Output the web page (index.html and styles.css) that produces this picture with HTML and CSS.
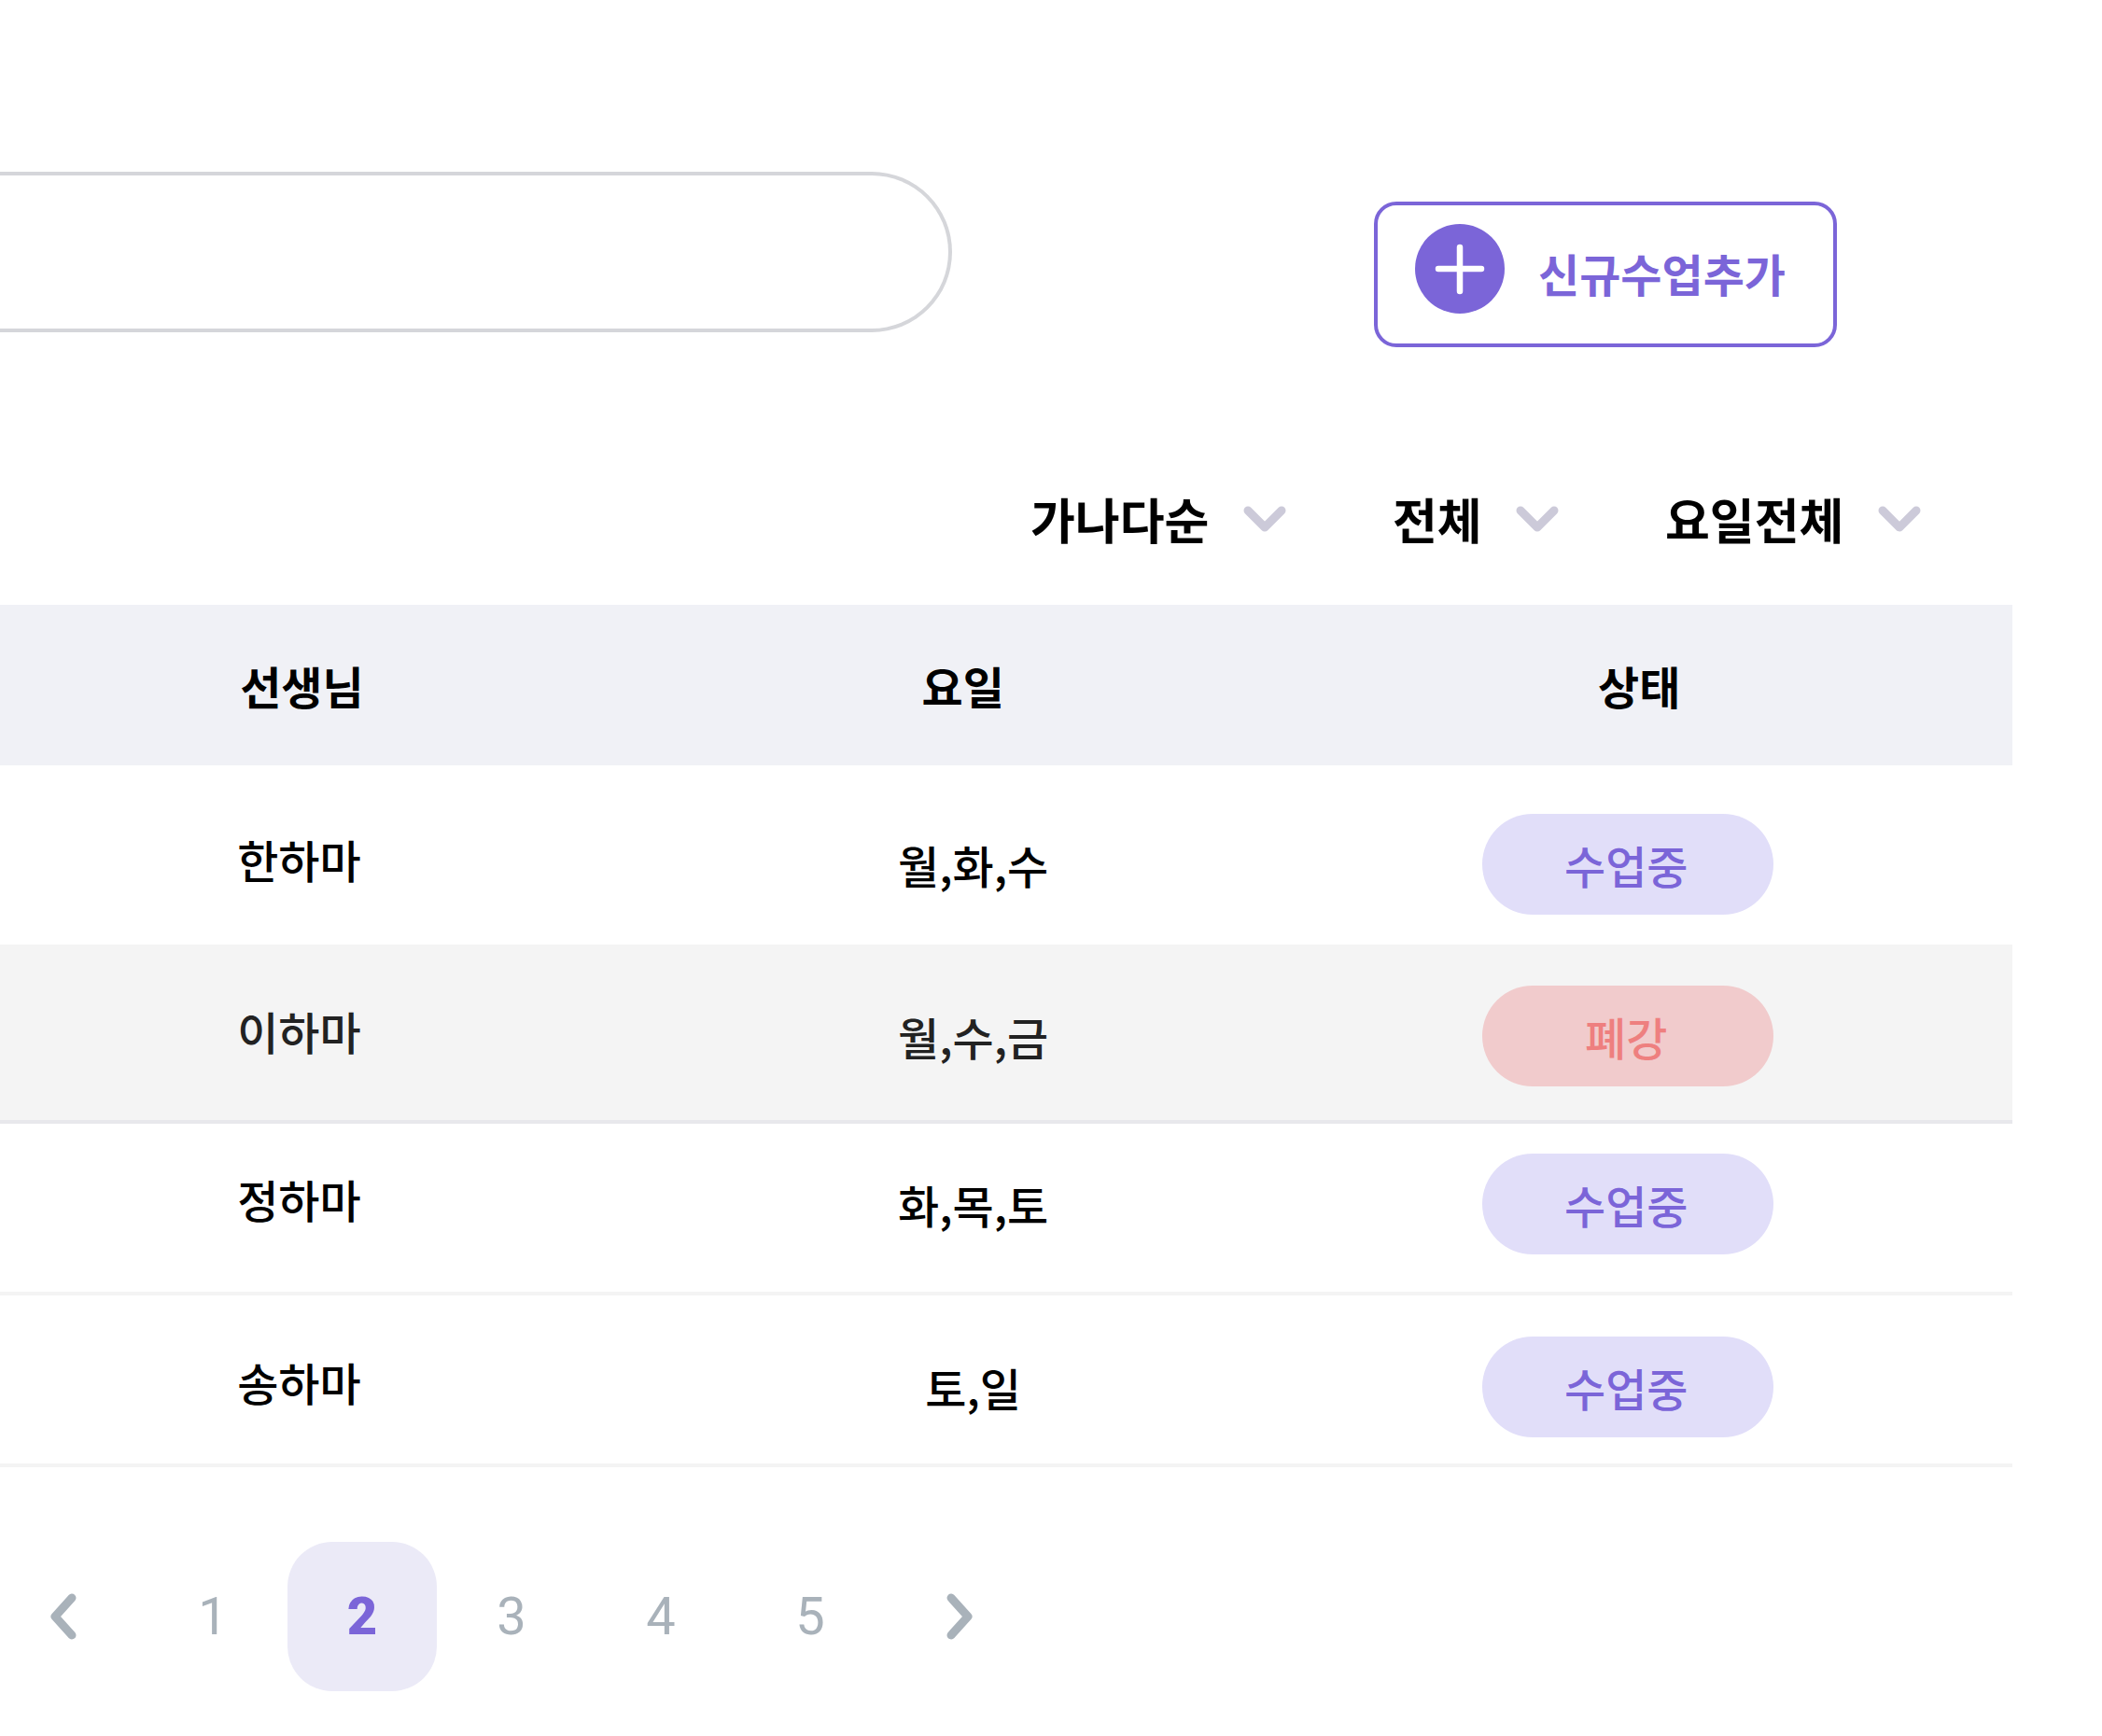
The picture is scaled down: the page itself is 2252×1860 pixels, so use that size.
FILE: index.html
```html
<!DOCTYPE html>
<html lang="ko">
	<head>
		<meta charset="UTF-8">
		<meta name="viewport" content="width=device-width, initial-scale=1.0">
		<title>수업 관리</title>
		<link rel="stylesheet" href="styles.css">
	</head>
	<body>
		<header class="toolbar">
			<input class="search" type="search" aria-label="수업 검색">
			<button class="add-button" type="button">
				<svg class="add-icon" viewBox="0 0 96 96" aria-hidden="true">
					<circle cx="48" cy="48" r="48" fill="#7b65d8"/>
					<path d="M25 48H71M48 25V72" stroke="#fff" stroke-width="6.5" stroke-linecap="round"/>
				</svg>
				<span>신규수업추가</span>
			</button>
		</header>

		<div class="filters">
			<div class="filter">
				<select aria-label="정렬">
					<option>가나다순</option>
				</select>
				<svg class="chevron" viewBox="0 0 46 28" aria-hidden="true"><path d="M5 5L23 23L41 5"/></svg>
			</div>
			<div class="filter">
				<select aria-label="상태">
					<option>전체</option>
				</select>
				<svg class="chevron" viewBox="0 0 46 28" aria-hidden="true"><path d="M5 5L23 23L41 5"/></svg>
			</div>
			<div class="filter">
				<select aria-label="요일">
					<option>요일전체</option>
				</select>
				<svg class="chevron" viewBox="0 0 46 28" aria-hidden="true"><path d="M5 5L23 23L41 5"/></svg>
			</div>
		</div>

		<table class="classes">
			<thead>
				<tr>
					<th class="teacher">선생님</th>
					<th class="days">요일</th>
					<th class="status">상태</th>
				</tr>
			</thead>
			<tbody>
				<tr>
					<td class="teacher">한하마</td>
					<td class="days">월,화,수</td>
					<td class="status"><span class="badge">수업중</span></td>
				</tr>
				<tr class="closed">
					<td class="teacher">이하마</td>
					<td class="days">월,수,금</td>
					<td class="status"><span class="badge badge-closed">폐강</span></td>
				</tr>
				<tr>
					<td class="teacher">정하마</td>
					<td class="days">화,목,토</td>
					<td class="status"><span class="badge">수업중</span></td>
				</tr>
				<tr>
					<td class="teacher">송하마</td>
					<td class="days">토,일</td>
					<td class="status"><span class="badge">수업중</span></td>
				</tr>
			</tbody>
		</table>

		<nav class="pagination" aria-label="페이지">
			<button class="arrow" type="button" aria-label="이전">
				<svg viewBox="0 0 28 52" aria-hidden="true"><path d="M23 6L5 26L23 46"/></svg>
			</button>
			<div class="pages">
				<button class="page" type="button">1</button>
				<button class="page current" type="button" aria-current="page">2</button>
				<button class="page" type="button">3</button>
				<button class="page" type="button">4</button>
				<button class="page" type="button">5</button>
			</div>
			<button class="arrow" type="button" aria-label="다음">
				<svg viewBox="0 0 28 52" aria-hidden="true"><path d="M5 6L23 26L5 46"/></svg>
			</button>
		</nav>
	</body>
</html>
```
FILE: styles.css
```css
* {
	box-sizing: border-box;
}
body {
	margin: 0;
	padding: 184px 96px 48px 0;
	background: #fff;
	color: #000;
	font-family: "Noto Sans CJK KR", sans-serif;
	font-size: 48px;
	line-height: 64px;
}
button, input, select {
	font: inherit;
}
button {
	padding: 0;
	border: none;
	background: none;
	cursor: pointer;
}
.toolbar {
	display: flex;
	justify-content: space-between;
	align-items: flex-start;
	padding-right: 188px;
}
/* the field runs in from the left edge of the page */
.search {
	appearance: none;
	width: 1020px;
	height: 172px;
	margin: 0;
	padding: 0 80px 0 40px;
	border: 4px solid #d5d6da;
	border-left: none;
	border-radius: 0 86px 86px 0;
	background: #fff;
	outline: none;
}
.add-button {
	display: flex;
	align-items: flex-start;
	gap: 36px;
	height: 156px;
	margin-top: 32px;
	padding: 20px 51px 0 40px;
	border: 4px solid #7b65d8;
	border-radius: 24px;
	color: #7b65d8;
	font-weight: 700;
	line-height: 104px;
}
.add-icon {
	width: 96px;
	height: 96px;
}
.filters {
	display: flex;
	justify-content: flex-end;
	gap: 114px;
	margin-top: 152px;
	padding-right: 98px;
}
.filter {
	position: relative;
	display: flex;
	align-items: center;
}
.filter select {
	appearance: none;
	height: 64px;
	padding: 0 82px 0 0;
	border: none;
	background: none;
	color: #000;
	font-size: 52px;
	font-weight: 700;
	outline: none;
}
.chevron {
	position: absolute;
	right: 0;
	width: 46px;
	height: 28px;
	pointer-events: none;
}
.chevron path {
	fill: none;
	stroke: #cccad9;
	stroke-width: 9;
	stroke-linecap: round;
	stroke-linejoin: round;
}
.classes {
	width: 100%;
	margin-top: 60px;
	border-collapse: separate;
	border-spacing: 0;
	table-layout: fixed;
	text-align: center;
}
.classes th {
	height: 172px;
	padding: 0;
	background: #f0f1f6;
	font-weight: 700;
}
.classes td {
	padding: 44px 6px 36px 0;
	border-bottom: 4px solid #f4f4f4;
	font-weight: 500;
}
.classes .teacher {
	width: 30%;
}
.classes .days {
	width: 37%;
}
.classes th.days {
	padding-right: 28px;
}
.classes th.status {
	padding-right: 88px;
}
.classes td.teacher {
	line-height: 96px;
	vertical-align: top;
}
.classes td.status {
	padding-right: 112px;
}
.classes tbody tr:first-child td {
	padding-top: 52px;
	padding-bottom: 32px;
	border-bottom: none;
}
.classes .closed td {
	border-bottom-color: #e8e8ec;
	background: #f4f4f4;
	color: #222;
}
.classes .closed + tr td {
	padding-top: 32px;
	padding-bottom: 40px;
}
.classes tbody tr:last-child td {
	padding-bottom: 28px;
}
.badge {
	display: block;
	width: 312px;
	margin: 0 auto;
	padding-right: 4px;
	border-radius: 54px;
	background: #e1def9;
	color: #7b65d8;
	line-height: 108px;
}
.classes .badge-closed {
	background: #f1cbcc;
	color: #ee7f7f;
}
.pagination {
	display: flex;
	gap: 32px;
	margin-top: 80px;
	padding-left: 20px;
}
.pages {
	display: flex;
}
.page {
	width: 160px;
	height: 160px;
	border-radius: 48px;
	color: #a9b2ba;
	font-family: Roboto, sans-serif;
	font-size: 56px;
}
.current {
	background: #ebeaf7;
	color: #7b65d8;
	font-weight: 900;
}
.arrow {
	display: flex;
	align-items: center;
	justify-content: center;
	width: 96px;
	height: 160px;
}
.arrow svg {
	width: 28px;
	height: 52px;
}
.arrow path {
	fill: none;
	stroke: #a9b2ba;
	stroke-width: 9;
	stroke-linecap: round;
	stroke-linejoin: round;
}
```
